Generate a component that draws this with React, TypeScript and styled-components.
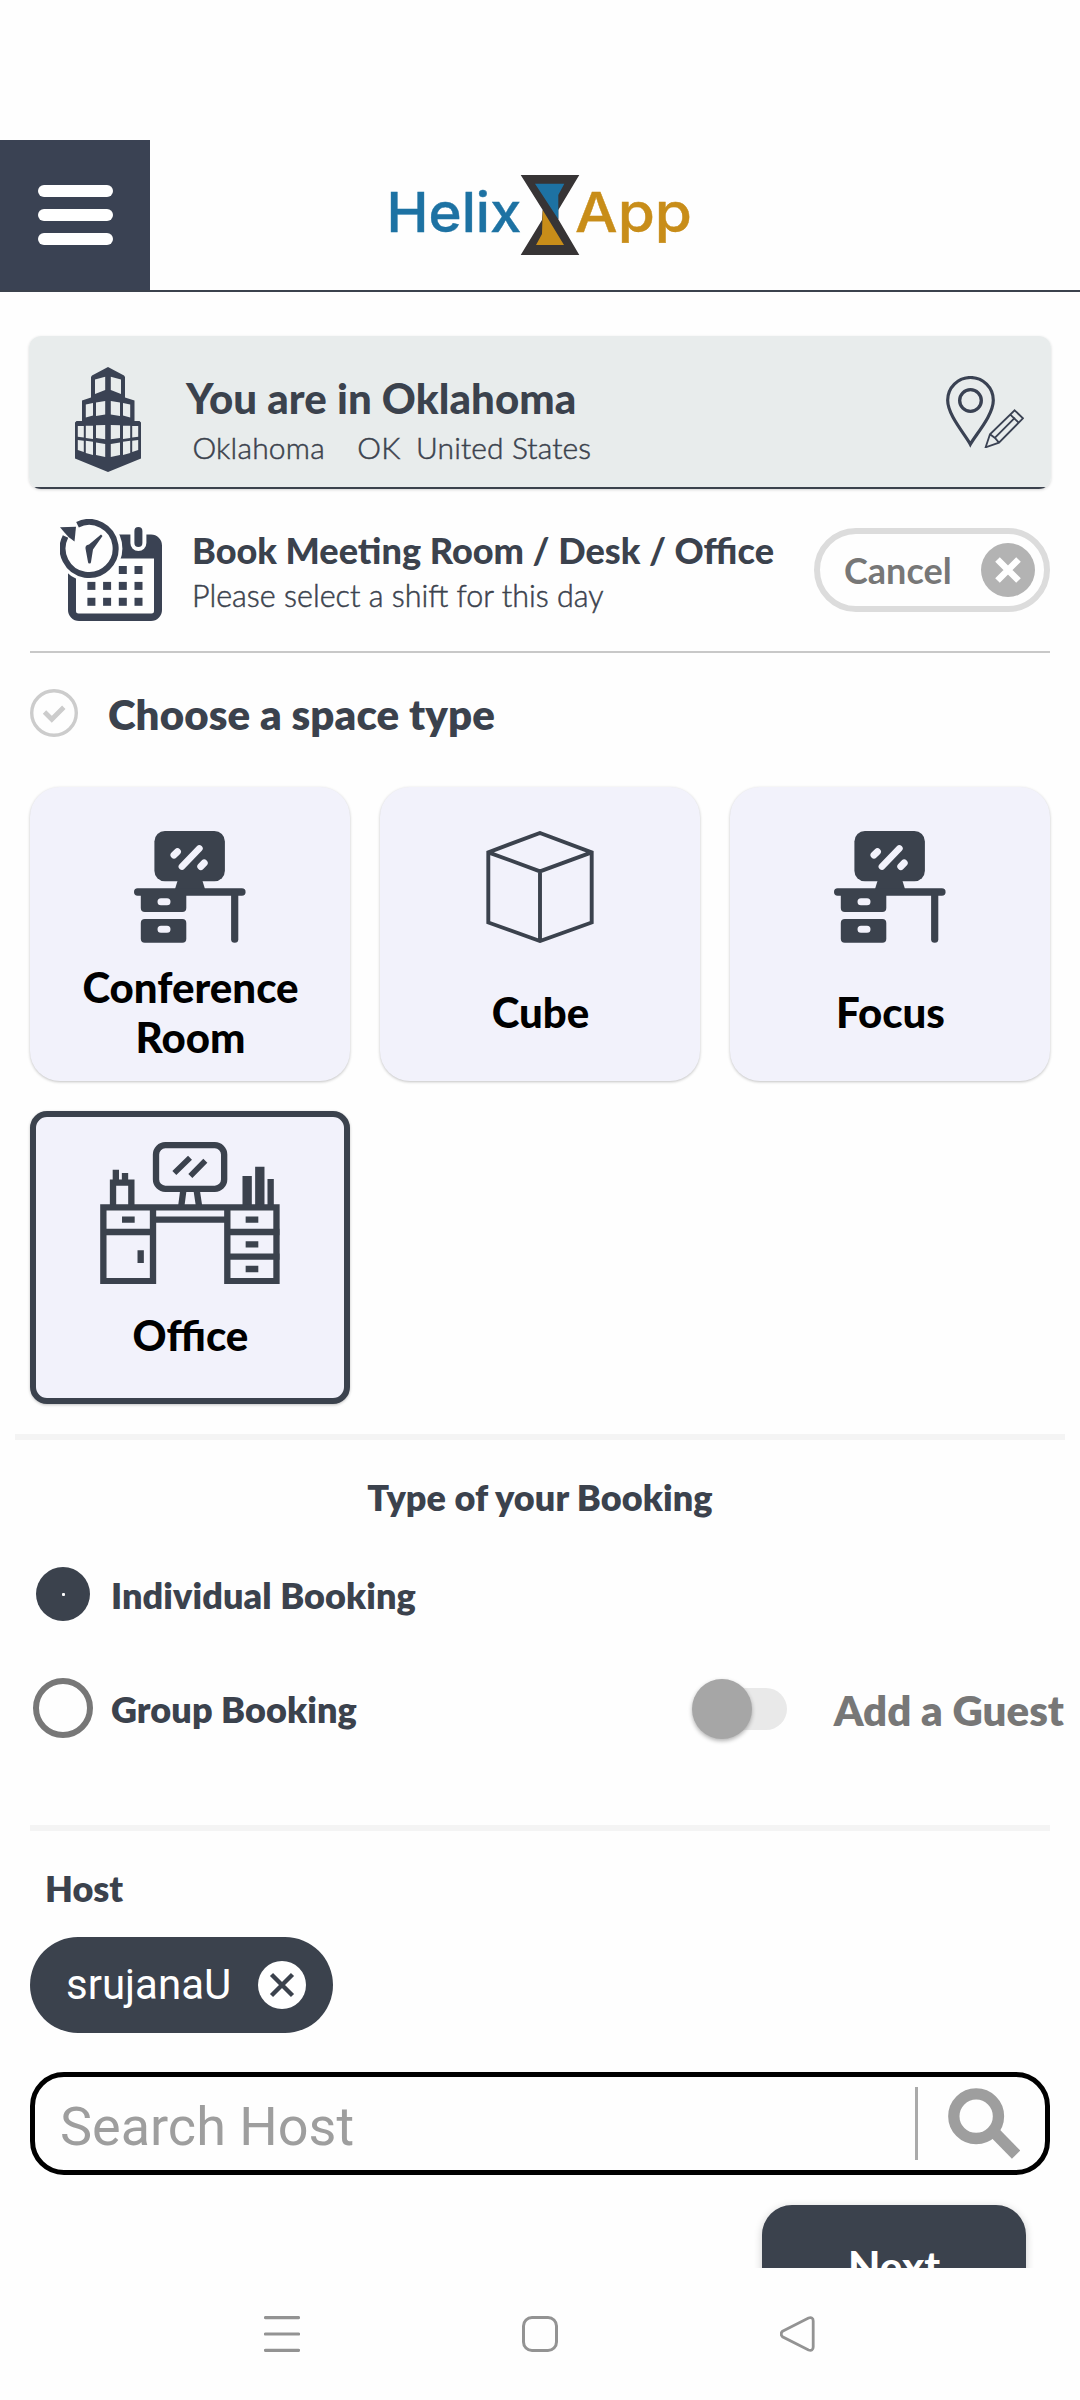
import React from 'react';
import styled, { createGlobalStyle } from 'styled-components';

const ink = '#3b424d';
const navy = '#3a4253';
const muted = '#777777';

const GlobalStyle = createGlobalStyle`
  * { box-sizing: border-box; }
  body { margin: 0; background: #fefefe; font-family: Lato, "Open Sans", sans-serif; color: ${ink}; }
  button, input { font: inherit; color: inherit; padding: 0; margin: 0; border: 0; background: none; }
`;

const Screen = styled.div`
  width: 1080px;
  height: 2400px;
  display: flex;
  flex-direction: column;
  overflow: hidden;
  background: #fefefe;
`;

const StatusBar = styled.div`
  height: 140px;
  flex: none;
`;

const Header = styled.header`
  flex: none;
  height: 152px;
  display: grid;
  grid-template-columns: 150px 1fr 150px;
  border-bottom: 2px solid ${ink};
`;

const MenuButton = styled.button`
  background: ${navy};
  display: flex;
  flex-direction: column;
  align-items: center;
  justify-content: center;
  gap: 12px;
`;

const MenuBar = styled.span`
  width: 75px;
  height: 12px;
  border-radius: 6px;
  background: #fff;
`;

const LogoSlot = styled.div`
  display: flex;
  align-items: center;
  justify-content: center;
`;

const Content = styled.main`
  flex: 1;
  min-height: 0;
  overflow: hidden;
`;

const Label = styled.span<{ $size: number; $line: number; $weight?: number; $color?: string; $spacing?: number }>`
  display: block;
  white-space: pre;
  font-size: ${p => p.$size}px;
  line-height: ${p => p.$line}px;
  font-weight: ${p => p.$weight ?? 800};
  color: ${p => p.$color ?? ink};
  letter-spacing: ${p => (p.$spacing === undefined ? 'normal' : `${p.$spacing}px`)};
`;

const LightLabel = styled(Label)`
  font-weight: 300;
  -webkit-text-stroke: 0.5px ${ink};
`;

const LocationCard = styled.section`
  margin: 44px 29px 0;
  height: 153px;
  padding: 0 27px 0 46px;
  display: flex;
  align-items: flex-start;
  background: linear-gradient(to top, ${ink} 2px, #e8ecec 2px);
  border-radius: 12px;
  box-shadow: 0 1px 3px rgba(0, 0, 0, 0.16);
`;

const BuildingSlot = styled.div`
  flex: none;
  height: 105px;
  margin-top: 31px;
`;

const PinSlot = styled.div`
  flex: none;
  margin-top: 40px;
`;

const LocationText = styled.div`
  flex: 1;
  padding: 37px 0 0 45px;
`;

const PlaceLine = styled.div`
  display: flex;
  margin: 6px 0 0 6.5px;
`;

const Place = styled(LightLabel)<{ $gap: number }>`
  margin-right: ${p => p.$gap}px;
`;

const BookingRow = styled.section`
  margin: 0 30px;
  height: 164px;
  padding-left: 30px;
  display: flex;
  border-bottom: 2px solid #c8c8c8;
  & > svg { margin-top: 30px; flex: none; }
`;

const BookingText = styled.div`
  flex: 1;
  padding: 39px 0 0 30px;
  display: flex;
  flex-direction: column;
  gap: 5px;
`;

const CancelButton = styled.button`
  flex: none;
  margin-top: 39px;
  width: 236px;
  height: 84px;
  border: 6px solid #dcdcdc;
  border-radius: 42px;
  padding: 0 9px 0 24px;
  display: flex;
  align-items: center;
  justify-content: space-between;
`;

const SectionHeading = styled.div`
  display: flex;
  align-items: flex-start;
  gap: 30px;
  margin: 36px 30px 48px;
  height: 50px;
`;

const SpaceGrid = styled.div`
  margin: 0 30px;
  display: grid;
  grid-template-columns: repeat(3, 320px);
  grid-template-rows: 294px 293px;
  gap: 30px;
`;

const SpaceCard = styled.button<{ $selected?: boolean }>`
  display: flex;
  flex-direction: column;
  align-items: center;
  background: #f2f2fb;
  border-radius: ${p => (p.$selected ? 17 : 30)}px;
  border: ${p => (p.$selected ? `6px solid ${ink}` : '0')};
  padding: ${p => (p.$selected ? '24.7px 0 11px' : '44px 0 0')};
  box-shadow: 0 1px 3px rgba(0, 0, 0, 0.24);
  & > svg { flex: none; }
`;

const CardLabel = styled.span`
  flex: 1;
  display: flex;
  align-items: center;
  width: 240px;
  padding-left: 1px;
  justify-content: center;
  text-align: center;
  font-size: 42px;
  line-height: 50.4px;
  font-weight: 900;
  color: #000;
`;

const Rule = styled.hr<{ $inset: number }>`
  height: 6px;
  border: 0;
  margin: 0 ${p => p.$inset}px;
  background: #f4f4f4;
`;

const TypeSection = styled.section`
  margin-top: 30px;
`;

const TypeTitle = styled.h2`
  margin: 35px 0 0;
  font: inherit;
  display: flex;
  justify-content: center;
`;

const OptionRow = styled.div<{ $top: number; $bottom: number }>`
  height: 60px;
  margin: ${p => p.$top}px 16px ${p => p.$bottom}px 33px;
  display: flex;
  align-items: center;
`;

const Option = styled.label`
  flex: 1;
  display: flex;
  align-items: center;
  gap: 18px;
`;

const OptionLabel = styled(Label)`
  padding-top: 2px;
`;

const GuestLabel = styled(Label)`
  padding-top: 4px;
`;

const RadioSlot = styled.span`
  width: 60px;
  height: 60px;
  display: flex;
  align-items: center;
  justify-content: center;
`;

const Radio = styled.span<{ $checked?: boolean }>`
  width: ${p => (p.$checked ? 54 : 60)}px;
  height: ${p => (p.$checked ? 54 : 60)}px;
  border-radius: 50%;
  border: ${p => (p.$checked ? 0 : 6)}px solid ${muted};
  background: ${p => (p.$checked ? ink : 'transparent')};
  display: flex;
  align-items: center;
  justify-content: center;
  &::after {
    content: '';
    display: ${p => (p.$checked ? 'block' : 'none')};
    width: 3px;
    height: 3px;
    border-radius: 1px;
    background: #fff;
  }
`;

const SwitchTrack = styled.span`
  width: 93px;
  height: 42px;
  border-radius: 21px;
  background: #e9e9e9;
  display: flex;
  align-items: center;
  margin: 2px 46.5px 0 0;
`;

const SwitchKnob = styled.span`
  flex: none;
  width: 60px;
  height: 60px;
  margin-left: -2.5px;
  border-radius: 50%;
  background: #a6a6a6;
  box-shadow: 0 2px 4px rgba(0, 0, 0, 0.3);
`;

const HostSection = styled.section`
  padding: 35px 30px 0;
  display: flex;
  flex-direction: column;
  align-items: flex-start;
`;

const HostTitle = styled(Label)`
  margin-left: 15px;
`;

const Chip = styled.div`
  margin-top: 27px;
  width: 303px;
  height: 96px;
  border-radius: 48px;
  background: ${ink};
  padding: 0 27px 0 36px;
  display: flex;
  align-items: center;
  justify-content: space-between;
  font-family: Roboto, sans-serif;
`;

const SearchBox = styled.div`
  margin-top: 39px;
  width: 1020px;
  height: 103px;
  border: 5px solid #000;
  border-radius: 34px;
  padding: 0 25px;
  display: flex;
  align-items: center;
`;

const SearchInput = styled.input`
  flex: 1;
  min-width: 0;
  height: 90px;
  font-family: Roboto, sans-serif;
  font-size: 54px;
  outline: none;
  && { padding-top: 5px; }
  &::placeholder { color: #9e9e9e; opacity: 1; }
`;

const SearchDivider = styled.span`
  width: 3px;
  height: 73px;
  background: #aaa;
  margin-right: 30px;
`;

const NextButton = styled.button`
  align-self: flex-end;
  flex: none;
  width: 264px;
  height: 120px;
  && { margin: 30px 24px 0 auto; padding-top: 36px; }
  border-radius: 30px;
  background: ${ink};
  box-shadow: 0 2px 8px rgba(0, 0, 0, 0.2);
  display: flex;
  justify-content: center;
`;

const NavBar = styled.nav`
  flex: none;
  height: 132px;
  background: #fefefe;
  display: flex;
  justify-content: center;
  align-items: center;
  gap: 222px;
`;

const Logo = () => (
  <svg width="300" height="80" viewBox="390 175 300 80" overflow="visible">
    <text x="386.5" y="232" fontFamily="Inter, sans-serif" fontSize="55.5" fontWeight="500" fill="#1d72a3" stroke="#1d72a3" strokeWidth="0.4" textLength="135" lengthAdjust="spacingAndGlyphs">Helix</text>
    <path d="M520.7 175H579.3L558.3 210V219.3L579.3 255H520.7L542 220L542.7 210z" fill="#373435" />
    <path d="M535 183.7H564.3L558.3 195V219.3z" fill="#1d72a3" />
    <path d="M542.7 210L564 245H536L542 234z" fill="#c88d19" />
    <text x="575" y="232" fontFamily="Inter, sans-serif" fontSize="55.5" fontWeight="500" fill="#c88d19" stroke="#c88d19" strokeWidth="0.4" textLength="117" lengthAdjust="spacingAndGlyphs">App</text>
  </svg>
);

const windowsLeft =
  'M20 12.5L30.2 9.7V23L20 27zM10.8 37.5L18 36V48.5L10.8 50.5zM21 35.6L30.2 34V47.5L21 49z' +
  'M2.8 59H8.8V70.5L2.8 69.7zM10.8 58.7H18V72L10.8 71zM21 58.3L30.2 58V72.3L21 71z' +
  'M2.8 73L8.8 73.7V85L2.8 83zM10.8 73.8L18 74.8V88L10.8 86zM21 75.5L30.2 77V90L21 88z';

const BuildingIcon = () => (
  <svg width="66" height="105" viewBox="0 0 66 105">
    <path d="M33 0L49 8.6L50 10V30.5L59.5 33.5V54H64.5L66 55.5V91.5L33 105L0 91.5V55.5L1.5 54H7V33.5L16 30.5V10L17 8.6z" fill={navy} />
    <path d={windowsLeft} fill="#e8ecec" />
    <path d={windowsLeft} fill="#e8ecec" transform="translate(66 0) scale(-1 1)" />
  </svg>
);

const PinPencilIcon = () => (
  <svg width="78.3" height="72.3" viewBox="1038 167 235 217" fill="none" stroke={navy}>
    <path d="M1111 372C1096 343 1043 285 1043 240A68.5 68.5 0 0 1 1180 240C1180 285 1127 343 1111 372z" strokeWidth="9.5" />
    <circle cx="1111.5" cy="240.5" r="32.5" strokeWidth="10" />
    <path d="M1244 270L1269 294L1197 367L1157 381L1170 342zM1231 283L1256 307M1170 342L1185 353L1197 367M1183 354L1245 292" strokeWidth="5.5" />
  </svg>
);

const CalendarIcon = () => (
  <svg width="102" height="102" viewBox="0 0 102 102">
    <path fillRule="evenodd" fill={navy} d="M8 50V91a11 11 0 0 0 11 11H91a11 11 0 0 0 11-11V26.500a11 11 0 0 0-11-11H50V39.500H94V92a2.500 2.500 0 0 1-2.500 2.500H18.500a2.500 2.500 0 0 1-2.500-2.500V50z" />
    <path d="M78.400 12V24" stroke="#fefefe" strokeWidth="16" strokeLinecap="round" />
    <path d="M78.400 12V24" stroke={navy} strokeWidth="8" strokeLinecap="round" />
    <circle cx="29.400" cy="29.400" r="33" fill="#fefefe" />
    <path d="M17.500 5.700A26.500 26.500 0 1 1 5.500 17.500" fill="none" stroke={navy} strokeWidth="6" />
    <path d="M0 8.300L16 7.700L14.500 22.500L8.500 18L4 13z" fill={navy} />
    <path d="M41 15.500L42.500 17L33 30.500L31 43a1.500 1.500 0 0 1-3 0L25.500 29.500Q25 26 29 25.500z" fill={navy} />
    {[0, 1, 2].map(row =>
      [0, 1, 2, 3].filter(col => row > 0 || col > 1).map(col => (
        <rect key={`${row}-${col}`} x={27.4 + col * 15.7} y={47 + row * 15.9} width="8" height="8" fill={navy} />
      ))
    )}
  </svg>
);

const CancelIcon = () => (
  <svg width="54" height="54" viewBox="0 0 54 54">
    <circle cx="27" cy="27" r="27" fill="#b3b3b3" />
    <path d="M16.500 16.500L37.500 37.500M37.500 16.500L16.500 37.500" stroke="#fff" strokeWidth="6.500" />
  </svg>
);

const StepCheckIcon = () => (
  <svg width="48" height="48" viewBox="0 0 48 48" fill="none" stroke="#cccccc">
    <circle cx="24" cy="24" r="22.300" strokeWidth="3.400" />
    <path d="M14.500 23L21.800 30.300L33.800 18.300" strokeWidth="4.800" />
  </svg>
);

const DeskIcon = () => (
  <svg width="112" height="112" viewBox="134 831 112 112" fill={ink}>
    <rect x="154.400" y="831" width="70.500" height="50.300" rx="10.500" />
    <path d="M177.500 881H202.500L205 889H175z" />
    <rect x="134" y="888.300" width="111.600" height="7.400" rx="3.700" />
    <path d="M140.800 894H186.300V908a4 4 0 0 1-4 4H144.800a4 4 0 0 1-4-4z" />
    <rect x="140.800" y="919" width="45.500" height="23.800" rx="4" />
    <path d="M234.700 893V939.200" stroke={ink} strokeWidth="7.200" strokeLinecap="round" />
    <g stroke="#f2f2fb" strokeLinecap="round">
      <path d="M199.300 848.500L182 866.500" strokeWidth="6.800" />
      <path d="M177.400 851.700L174 855M204.200 863L200.800 866.500" strokeWidth="7" />
      <path d="M161 901.800H167M161 929.300H167" strokeWidth="7" />
    </g>
  </svg>
);

const CubeIcon = () => (
  <svg width="112" height="112" viewBox="484 831 112 112" fill="none" stroke={ink} strokeWidth="3.900">
    <path d="M540 833L591.700 852.300V922.500L540 941L488.300 922.500V852.300zM488.300 852.300L540 871.300L591.700 852.300M540 871.300V941" />
  </svg>
);

const OfficeIcon = () => (
  <svg width="180" height="142.300" viewBox="300 155 540 427" fill="none" stroke={ink} strokeWidth="19">
    <rect x="468" y="164.500" width="204.500" height="131" rx="28" />
    <path d="M523 248L570 202M571 257L616 211" strokeWidth="17" />
    <path d="M550 300L544 346M590 300L597 346" />
    <path d="M339 345V277H394V345" />
    <path d="M347.500 238V275M375 248V275" />
    <path d="M741.500 257V345M779.500 229V345" strokeWidth="28" />
    <path d="M812 266V345" />
    <path d="M310 572.500V351H829.500V572.500H682V351M310 572.500H459V351M310 425H459M459 388H682M682 425H830M682 499H830" strokeLinecap="square" />
    <path d="M366 388H404M737 388H775M737 462H775M737 536H775M422 480V518" />
  </svg>
);

const ChipRemoveIcon = () => (
  <svg width="48" height="48" viewBox="0 0 48 48">
    <circle cx="24" cy="24" r="24" fill="#fff" />
    <path d="M13.500 13.500L34.500 34.500M34.500 13.500L13.500 34.500" stroke={ink} strokeWidth="4.400" />
  </svg>
);

const SearchIcon = () => (
  <svg width="72.300" height="71" viewBox="743 144 217 213" fill="none" stroke="#9e9e9e">
    <circle cx="827.500" cy="228.500" r="67" strokeWidth="34" />
    <path d="M882 277L947.500 344" strokeWidth="35" />
  </svg>
);

const RecentsIcon = () => (
  <svg width="36" height="36" viewBox="0 0 36 36" stroke="#939393" strokeWidth="3.200" strokeLinecap="round">
    <path d="M1.500 1.600H34.500M1.500 18H34.500M1.500 34.300H34.500" />
  </svg>
);

const HomeIcon = () => (
  <svg width="36" height="36" viewBox="0 0 36 36" fill="none" stroke="#939393" strokeWidth="3">
    <rect x="1.500" y="1.500" width="33" height="33" rx="8.500" />
  </svg>
);

const BackIcon = () => (
  <svg width="36" height="36" viewBox="0 0 36 36" fill="none" stroke="#939393" strokeWidth="2.800">
    <path d="M2.500 15.200L28.500 2Q33.200 .8 33.200 5V31Q33.200 35.200 28.500 34L2.500 20.800Q-.2 18 2.500 15.200z" />
  </svg>
);

const spaces = [
  { name: 'Conference Room', icon: <DeskIcon /> },
  { name: 'Cube', icon: <CubeIcon /> },
  { name: 'Focus', icon: <DeskIcon /> },
  { name: 'Office', icon: <OfficeIcon />, selected: true },
];

export default function App() {
  return (
    <Screen>
      <GlobalStyle />
      <StatusBar />
      <Header>
        <MenuButton aria-label="Menu">
          <MenuBar />
          <MenuBar />
          <MenuBar />
        </MenuButton>
        <LogoSlot>
          <Logo />
        </LogoSlot>
      </Header>
      <Content>
        <LocationCard>
          <BuildingSlot><BuildingIcon /></BuildingSlot>
          <LocationText>
            <Label $size={42} $line={50} $weight={900} $spacing={0.09}>You are in Oklahoma</Label>
            <PlaceLine>
              <Place $size={30} $line={36} $spacing={0.2} $gap={32.5}>Oklahoma</Place>
              <Place $size={30} $line={36} $spacing={0.2} $gap={15.5}>OK</Place>
              <Place $size={30} $line={36} $spacing={0.1} $gap={0}>United States</Place>
            </PlaceLine>
          </LocationText>
          <PinSlot><PinPencilIcon /></PinSlot>
        </LocationCard>
        <BookingRow>
          <CalendarIcon />
          <BookingText>
            <Label $size={36.08} $line={44} $weight={900}>Book Meeting Room / Desk / Office</Label>
            <LightLabel $size={30.5} $line={36}>Please select a shift for this day</LightLabel>
          </BookingText>
          <CancelButton>
            <Label $size={36} $line={44} $weight={700} $color={muted}>Cancel</Label>
            <CancelIcon />
          </CancelButton>
        </BookingRow>
        <SectionHeading>
          <StepCheckIcon />
          <Label $size={42} $line={50} $spacing={0.09}>Choose a space type</Label>
        </SectionHeading>
        <SpaceGrid>
          {spaces.map(space => (
            <SpaceCard key={space.name} $selected={space.selected}>
              {space.icon}
              <CardLabel>{space.name}</CardLabel>
            </SpaceCard>
          ))}
        </SpaceGrid>
        <TypeSection>
          <Rule $inset={15} />
          <TypeTitle>
            <Label $size={36} $line={44} $spacing={0.08}>Type of your Booking</Label>
          </TypeTitle>
          <OptionRow $top={45} $bottom={0}>
            <Option>
              <RadioSlot><Radio $checked /></RadioSlot>
              <OptionLabel $size={36} $line={44} $spacing={0.08}>Individual Booking</OptionLabel>
            </Option>
          </OptionRow>
          <OptionRow $top={54} $bottom={87}>
            <Option>
              <RadioSlot><Radio /></RadioSlot>
              <OptionLabel $size={36} $line={44} $spacing={0.08}>Group Booking</OptionLabel>
            </Option>
            <SwitchTrack><SwitchKnob /></SwitchTrack>
            <GuestLabel $size={42} $line={50} $color={muted}>Add a Guest</GuestLabel>
          </OptionRow>
          <Rule $inset={30} />
        </TypeSection>
        <HostSection>
          <HostTitle $size={36} $line={44}>Host</HostTitle>
          <Chip>
            <Label $size={42} $line={50} $weight={400} $color="#fff">srujanaU</Label>
            <ChipRemoveIcon />
          </Chip>
          <SearchBox>
            <SearchInput placeholder="Search Host" />
            <SearchDivider />
            <SearchIcon />
          </SearchBox>
          <NextButton>
            <Label $size={42} $line={50} $weight={900} $color="#fff">Next</Label>
          </NextButton>
        </HostSection>
      </Content>
      <NavBar>
        <RecentsIcon />
        <HomeIcon />
        <BackIcon />
      </NavBar>
    </Screen>
  );
}
